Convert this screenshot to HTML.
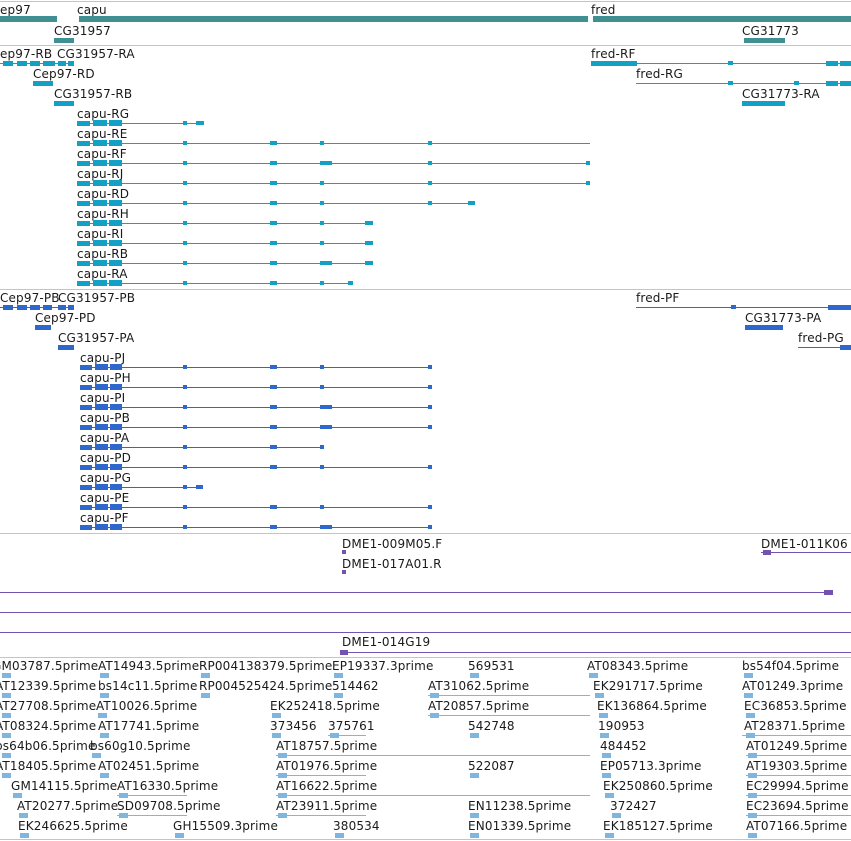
<!DOCTYPE html>
<html><head><meta charset="utf-8">
<style>
html,body{margin:0;padding:0;background:#fff;width:851px;height:841px;overflow:hidden;position:relative}
.t{position:absolute;font-family:"DejaVu Sans","Liberation Sans",sans-serif;font-size:12px;line-height:12px;color:#1a1a1a;white-space:nowrap;letter-spacing:0.15px}
.l,.b,.h{position:absolute}
.h{height:1px;background:#c4c4c4;left:0;width:851px}
</style></head><body>
<div class="h" style="top:1px"></div>
<div class="h" style="top:45px"></div>
<div class="h" style="top:289px"></div>
<div class="h" style="top:533px"></div>
<div class="h" style="top:657px"></div>
<div class="h" style="top:839px"></div>
<script>
function T(x,y,s){var d=document.createElement('div');d.className='t';d.style.left=x+'px';d.style.top=(y+1)+'px';d.textContent=s;document.body.appendChild(d);}
function L(x1,x2,y,c){var d=document.createElement('div');d.className='l';d.style.cssText='left:'+x1+'px;width:'+(x2-x1)+'px;top:'+y+'px;height:1px;background:'+c;document.body.appendChild(d);}
function B(x1,x2,y,h,c){var d=document.createElement('div');d.className='b';d.style.cssText='left:'+x1+'px;width:'+(x2-x1)+'px;top:'+(y-Math.floor(h/2))+'px;height:'+h+'px;background:'+c;document.body.appendChild(d);}
var G='#3f8f93',R='#12a0c4',P='#2f68cc',V='#7353b0',E='#7fb6df';
T(0,3,'ep97');T(77,3,'capu');T(591,3,'fred');
B(0,57,19,6,G);B(79,588,19,6,G);B(593,851,19,6,G);
T(54,24,'CG31957');B(54,74,40,5,G);
T(742,24,'CG31773');B(744,785,40,5,G);
T(0,47,'ep97-RB');T(57,47,'CG31957-RA');
L(0,74,63,R);[[3,13],[17,27],[30,40],[43,55],[58,66],[68,74]].forEach(function(e){B(e[0],e[1],63,5,R)});
T(591,47,'fred-RF');B(591,637,63,5,R);L(637,851,63,R);B(728,733,63,4,R);B(826,838,63,5,R);B(840,851,63,5,R);
T(33,67,'Cep97-RD');B(33,53,83,5,R);
T(636,67,'fred-RG');L(636,851,83,R);B(728,733,83,4,R);B(794,799,83,4,R);B(826,838,83,5,R);B(840,851,83,5,R);
T(54,87,'CG31957-RB');B(54,74,103,5,R);
T(742,87,'CG31773-RA');B(742,785,103,5,R);
var a=[183,187],b=[270,277],c2=[320,332],c1=[320,324],d=[428,432];
var caps=[['RG',204,[a,[196,204]]],['RE',590,[a,b,c1,d]],['RF',590,[a,b,c2,d,[586,590]]],['RJ',590,[a,b,c1,d,[586,590]]],['RD',475,[a,b,c1,d,[468,475]]],['RH',373,[a,b,c1,[365,373]]],['RI',373,[a,b,c1,[365,373]]],['RB',373,[a,b,c2,[365,373]]],['RA',353,[a,b,c1,[348,353]]]];
caps.forEach(function(c,i){var y=123+20*i;T(77,107+20*i,'capu-'+c[0]);L(77,c[1],y,R);B(77,90,y,5,R);B(93,107,y,6,R);B(109,122,y,6,R);
c[2].forEach(function(e){B(e[0],e[1],y,4,R)});});
T(0,291,'Cep97-PB');T(58,291,'CG31957-PB');L(0,74,307,P);[[3,13],[17,27],[30,40],[43,52],[58,66],[68,74]].forEach(function(e){B(e[0],e[1],307,5,P)});
T(636,291,'fred-PF');L(636,851,307,P);B(731,736,307,4,P);B(828,851,307,5,P);
T(35,311,'Cep97-PD');B(35,51,327,5,P);
T(745,311,'CG31773-PA');B(745,783,327,5,P);
T(58,331,'CG31957-PA');B(58,74,347,5,P);
T(798,331,'fred-PG');L(798,851,347,P);B(840,851,347,5,P);
var prs=[['PJ',432,[a,b,c1,d]],['PH',432,[a,b,c1,d]],['PI',432,[a,b,c2,d]],['PB',432,[a,b,c2,d]],['PA',324,[a,b,c1]],['PD',432,[a,b,c1,d]],['PG',203,[a,[196,203]]],['PE',432,[a,b,c1,d]],['PF',432,[a,b,c2,d]]];
prs.forEach(function(c,i){var y=367+20*i;T(80,351+20*i,'capu-'+c[0]);L(80,c[1],y,P);B(80,92,y,5,P);B(95,108,y,6,P);B(110,122,y,6,P);
c[2].forEach(function(e){B(e[0],e[1],y,4,P)});});
T(342,537,'DME1-009M05.F');B(342,346,552,4,V);
T(761,537,'DME1-011K06');L(761,851,552,V);B(763,771,552,5,V);
T(342,557,'DME1-017A01.R');B(342,346,572,4,V);
L(0,833,592,V);B(824,833,592,5,V);L(0,851,612,V);L(0,851,632,V);
T(342,635,'DME1-014G19');L(340,851,652,V);B(340,348,652,5,V);
var rows=[
[[-8,'GM03787.5prime'],[98,'AT14943.5prime'],[199,'RP004138379.5prime'],[332,'EP19337.3prime'],[468,'569531'],[587,'AT08343.5prime'],[742,'bs54f04.5prime']],
[[-5,'AT12339.5prime'],[98,'bs14c11.5prime'],[199,'RP004525424.5prime'],[332,'514462'],[428,'AT31062.5prime'],[593,'EK291717.5prime'],[742,'AT01249.3prime']],
[[-5,'AT27708.5prime'],[96,'AT10026.5prime'],[270,'EK252418.5prime'],[428,'AT20857.5prime'],[597,'EK136864.5prime'],[744,'EC36853.5prime']],
[[-5,'AT08324.5prime'],[98,'AT17741.5prime'],[270,'373456'],[328,'375761'],[468,'542748'],[598,'190953'],[744,'AT28371.5prime']],
[[-5,'bs64b06.5prime'],[90,'bs60g10.5prime'],[276,'AT18757.5prime'],[600,'484452'],[746,'AT01249.5prime']],
[[-5,'AT18405.5prime'],[98,'AT02451.5prime'],[276,'AT01976.5prime'],[468,'522087'],[600,'EP05713.3prime'],[746,'AT19303.5prime']],
[[11,'GM14115.5prime'],[117,'AT16330.5prime'],[276,'AT16622.5prime'],[603,'EK250860.5prime'],[746,'EC29994.5prime']],
[[17,'AT20277.5prime'],[117,'SD09708.5prime'],[276,'AT23911.5prime'],[468,'EN11238.5prime'],[610,'372427'],[746,'EC23694.5prime']],
[[18,'EK246625.5prime'],[173,'GH15509.3prime'],[333,'380534'],[468,'EN01339.5prime'],[603,'EK185127.5prime'],[746,'AT07166.5prime']]];
rows.forEach(function(r,i){var y=659+20*i,my=y+16;r.forEach(function(e){T(e[0],y,e[1]);var x=Math.max(e[0],0);B(x+2,x+11,my,5,E);});});
L(428,590,695,E);L(428,590,715,E);L(276,590,755,E);L(276,590,795,E);L(328,366,735,E);L(117,187,795,E);L(117,187,815,E);L(276,366,775,E);L(276,366,815,E);
L(742,851,735,E);L(746,851,755,E);L(746,851,775,E);L(746,851,795,E);L(746,851,815,E);
</script>
</body></html>
